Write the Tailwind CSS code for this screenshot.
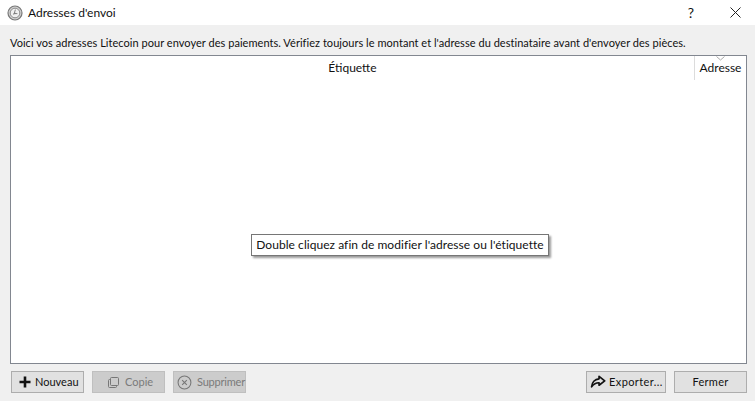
<!DOCTYPE html>
<html lang="fr">
<head>
<meta charset="utf-8">
<script src="https://cdn.jsdelivr.net/npm/@tailwindcss/browser@4"></script>
</head>
<body class="w-[755px] h-[401px] overflow-hidden bg-[#f0f0f0] font-['Lato','Open_Sans',sans-serif] text-[12px] text-[#111] flex flex-col">
  <header class="h-[25px] bg-white flex items-center shrink-0">
    <svg class="ml-[7px] w-[16px] h-[16px]" viewBox="0 0 16 16" fill="none" stroke="#777"><circle cx="8" cy="8" r="7" fill="#d0d0d0" stroke-width="1.2"/><circle cx="8" cy="8" r="4.800" fill="#f0f0f0" stroke-width=".8"/><path d="M8.400 4.600 7.200 8.600h3.200M6 9.200l2.800-1" stroke-width=".9"/></svg>
    <span class="ml-[5px] text-[12px] leading-none">Adresses d'envoi</span>
    <span class="ml-auto mr-[36px] text-[14px] leading-none">?</span>
    <svg class="mr-[14px] w-[11px] h-[11px]" viewBox="0 0 11 11" stroke="#222" stroke-width="1"><path d="M.5.5l10 10M10.500.5l-10 10"/></svg>
  </header>
  <main class="flex-1 flex flex-col pl-[10px] pr-[8px]">
    <p class="h-[30px] pt-[10px] leading-[16px] whitespace-nowrap text-[11px] tracking-[0.04px]">Voici vos adresses Litecoin pour envoyer des paiements. Vérifiez toujours le montant et l'adresse du destinataire avant d'envoyer des pièces.</p>
    <section class="relative h-[309px] bg-white border border-[#828790] flex flex-col">
      <div class="h-[24px] flex shrink-0">
        <div class="flex-1 flex items-center justify-center leading-none">Étiquette</div>
        <div class="relative w-[52px] border-l border-[#dcdcdc] flex items-center justify-center leading-none">
          <svg class="absolute top-0 left-[21px] w-[9px] h-[5px]" viewBox="0 0 9 5" fill="none" stroke="#aaa"><path d="M.5.500 4.500 4 8.500.5"/></svg>
          Adresse
        </div>
      </div>
      <div class="flex-1"></div>
      <div class="absolute left-[240px] top-[178px] w-[298px] h-[22px] flex items-center justify-center bg-white border border-[#767676] shadow-[2px_2px_2px_rgba(0,0,0,0.4)] whitespace-nowrap leading-none tracking-[0.05px]">Double cliquez afin de modifier l'adresse ou l'étiquette</div>
    </section>
    <footer class="mt-[7px] h-[22px] flex items-stretch pl-[1px] text-[11px]">
      <button class="w-[73px] pl-[7px] flex items-center gap-[4px] bg-[#e1e1e1] border border-[#adadad]">
        <svg class="w-[12px] h-[12px]" viewBox="0 0 12 12" fill="#111"><path d="M4.700.5h2.600v4.200h4.200v2.600H7.300v4.200H4.700V7.300H.5V4.700h4.200z"/></svg>
        <span>Nouveau</span>
      </button>
      <button disabled class="ml-[8px] w-[73px] pl-[14px] flex items-center gap-[5px] bg-[#cccccc] border border-[#bfbfbf] text-[#7a7a7a]">
        <svg class="w-[13px] h-[13px]" viewBox="0 0 13 13" fill="none" stroke="#777"><rect x="3.500" y="1.500" width="8" height="8" rx="1"/><path d="M3.500 3.500H2.500a1 1 0 0 0-1 1v6a1 1 0 0 0 1 1h6a1 1 0 0 0 1-1v-1"/></svg>
        <span>Copie</span>
      </button>
      <button disabled class="ml-[8px] w-[73px] pl-[3px] flex items-center gap-[5px] bg-[#cccccc] border border-[#bfbfbf] text-[#7a7a7a]">
        <svg class="w-[15px] h-[15px]" viewBox="0 0 14 14" fill="none" stroke="#777"><circle cx="7" cy="7" r="6"/><path d="M4.800 4.800l4.400 4.400M9.200 4.800l-4.400 4.400"/></svg>
        <span class="tracking-[-0.2px]">Supprimer</span>
      </button>
      <button class="ml-auto w-[80px] pl-[3px] flex items-center gap-[3px] bg-[#e1e1e1] border border-[#adadad]">
        <svg class="w-[16px] h-[14px]" viewBox="0 0 15 13" fill="none" stroke="#111" stroke-width="1.600" stroke-linejoin="round"><path d="M8.500 1.200 13.800 5.500 8.500 9.500V7.200C5.500 7 3.500 8.500 1.500 11 1.800 7 4.500 3.800 8.500 3.500z"/></svg>
        <span class="tracking-[0.4px]">Exporter...</span>
      </button>
      <button class="ml-[8px] w-[73px] flex items-center justify-center bg-[#e1e1e1] border border-[#adadad] tracking-[0.3px]">Fermer</button>
    </footer>
  </main>
</body>
</html>
